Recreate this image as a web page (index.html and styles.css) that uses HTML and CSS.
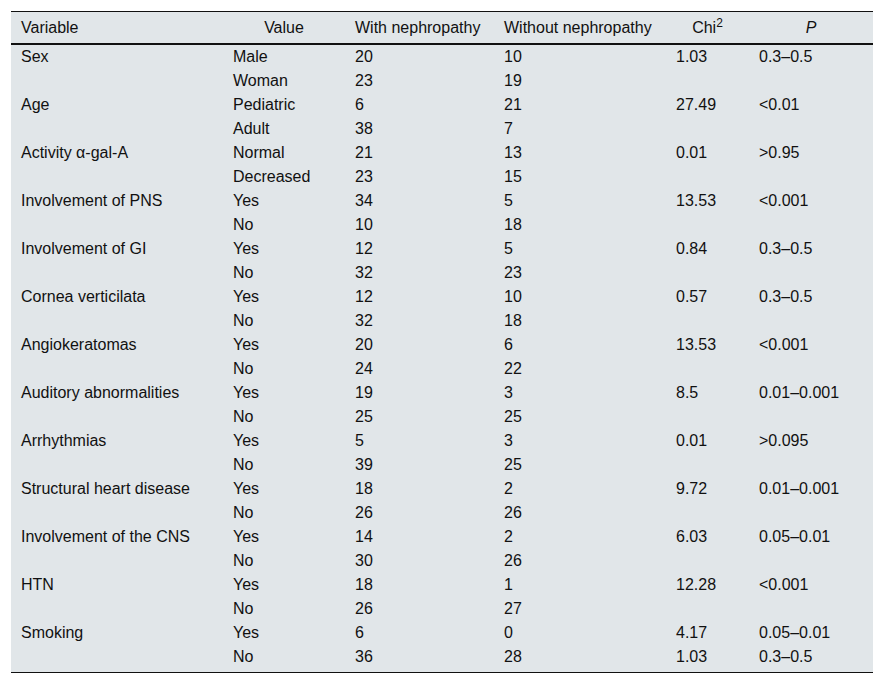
FILE: index.html
```html
<!DOCTYPE html>
<html>
<head>
<meta charset="utf-8">
<link rel="stylesheet" href="styles.css">
</head>
<body>
<div class="wrap">
<table class="data">
<colgroup>
<col class="c1"><col class="c2"><col class="c3"><col class="c4"><col class="c5"><col class="c6">
</colgroup>
<thead>
<tr><th class="left">Variable</th><th>Value</th><th class="left">With nephropathy</th><th class="left">Without nephropathy</th><th>Chi<sup>2</sup></th><th><i>P</i></th></tr>
</thead>
<tbody>
<tr><td>Sex</td><td>Male</td><td>20</td><td>10</td><td>1.03</td><td>0.3–0.5</td></tr>
<tr><td></td><td>Woman</td><td>23</td><td>19</td><td></td><td></td></tr>
<tr><td>Age</td><td>Pediatric</td><td>6</td><td>21</td><td>27.49</td><td>&lt;0.01</td></tr>
<tr><td></td><td>Adult</td><td>38</td><td>7</td><td></td><td></td></tr>
<tr><td>Activity α-gal-A</td><td>Normal</td><td>21</td><td>13</td><td>0.01</td><td>&gt;0.95</td></tr>
<tr><td></td><td>Decreased</td><td>23</td><td>15</td><td></td><td></td></tr>
<tr><td>Involvement of PNS</td><td>Yes</td><td>34</td><td>5</td><td>13.53</td><td>&lt;0.001</td></tr>
<tr><td></td><td>No</td><td>10</td><td>18</td><td></td><td></td></tr>
<tr><td>Involvement of GI</td><td>Yes</td><td>12</td><td>5</td><td>0.84</td><td>0.3–0.5</td></tr>
<tr><td></td><td>No</td><td>32</td><td>23</td><td></td><td></td></tr>
<tr><td>Cornea verticilata</td><td>Yes</td><td>12</td><td>10</td><td>0.57</td><td>0.3–0.5</td></tr>
<tr><td></td><td>No</td><td>32</td><td>18</td><td></td><td></td></tr>
<tr><td>Angiokeratomas</td><td>Yes</td><td>20</td><td>6</td><td>13.53</td><td>&lt;0.001</td></tr>
<tr><td></td><td>No</td><td>24</td><td>22</td><td></td><td></td></tr>
<tr><td>Auditory abnormalities</td><td>Yes</td><td>19</td><td>3</td><td>8.5</td><td>0.01–0.001</td></tr>
<tr><td></td><td>No</td><td>25</td><td>25</td><td></td><td></td></tr>
<tr><td>Arrhythmias</td><td>Yes</td><td>5</td><td>3</td><td>0.01</td><td>&gt;0.095</td></tr>
<tr><td></td><td>No</td><td>39</td><td>25</td><td></td><td></td></tr>
<tr><td>Structural heart disease</td><td>Yes</td><td>18</td><td>2</td><td>9.72</td><td>0.01–0.001</td></tr>
<tr><td></td><td>No</td><td>26</td><td>26</td><td></td><td></td></tr>
<tr><td>Involvement of the CNS</td><td>Yes</td><td>14</td><td>2</td><td>6.03</td><td>0.05–0.01</td></tr>
<tr><td></td><td>No</td><td>30</td><td>26</td><td></td><td></td></tr>
<tr><td>HTN</td><td>Yes</td><td>18</td><td>1</td><td>12.28</td><td>&lt;0.001</td></tr>
<tr><td></td><td>No</td><td>26</td><td>27</td><td></td><td></td></tr>
<tr><td>Smoking</td><td>Yes</td><td>6</td><td>0</td><td>4.17</td><td>0.05–0.01</td></tr>
<tr class="last"><td></td><td>No</td><td>36</td><td>28</td><td>1.03</td><td>0.3–0.5</td></tr>
</tbody>
</table>
</div>
</body>
</html>
```
FILE: styles.css
```css
html, body {
  margin: 0;
  padding: 0;
  background: #ffffff;
}
.wrap {
  padding: 11px;
}
.data {
  width: 862px;
  border-collapse: collapse;
  table-layout: fixed;
  background: #e1e6e9;
  font-family: "Liberation Sans", Arial, sans-serif;
  font-size: 16px;
  color: #111;
  border-top: 1px solid #111;
  border-bottom: 1px solid #111;
}
.c1 { width: 212px; }
.c2 { width: 122px; }
.c3 { width: 149px; }
.c4 { width: 172px; }
.c5 { width: 83px; }
.c6 { width: 124px; }
.data th {
  font-weight: normal;
  text-align: center;
  line-height: 24px;
  padding: 4px 10px 3px;
  border-bottom: 2px solid #111;
  white-space: nowrap;
}
.data th.left {
  text-align: left;
}
.data th sup {
  font-size: 12px;
  line-height: 0;
  vertical-align: 6px;
}
.data td {
  line-height: 24px;
  padding: 0 10px;
  text-align: left;
  vertical-align: top;
  white-space: nowrap;
}
.data tr.last td {
  padding-bottom: 3px;
}
```
